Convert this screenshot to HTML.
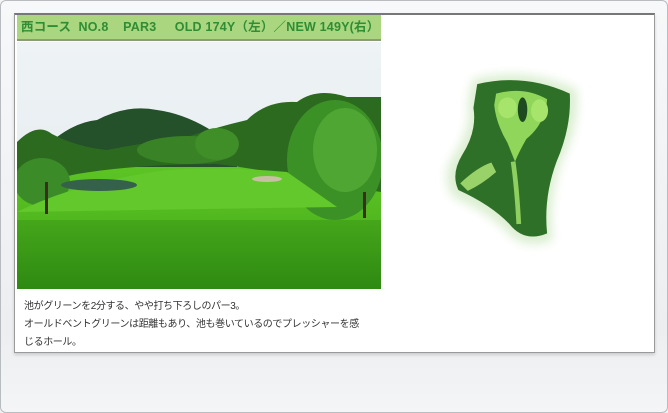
<!DOCTYPE html>
<html><head><meta charset="utf-8"><style>
body{margin:0;width:668px;height:413px;overflow:hidden;background:linear-gradient(#f4f5f6,#e9ebed 70%,#f0f1f2);font-family:"Liberation Sans","Noto Sans CJK JP",sans-serif;position:relative}
.frame{position:absolute;left:0;top:0;width:666px;height:411px;border:1px solid #b8bcc0;border-radius:6px;background:linear-gradient(#f7f8f9,#eceef0 80%,#f4f5f6)}
.panel{position:absolute;left:14px;top:13px;width:639px;height:337px;background:#fff;border:1px solid #9a9a9a;border-top:2px solid #777;box-shadow:0 2px 3px rgba(0,0,0,.15)}
.hdr{position:absolute;left:17px;top:15px;width:364px;height:26px;background:#a9d67e;border-bottom:2px solid #8a9b78;box-sizing:border-box;color:#2f8d35;font-weight:bold;font-size:12.5px;line-height:25px;padding-left:4px;white-space:pre;letter-spacing:0.2px}
.photo{position:absolute;left:17px;top:42px}
.map{position:absolute;left:430px;top:50px}
.txt{position:absolute;left:24px;top:298px;font-size:10px;line-height:18px;color:#333;letter-spacing:-0.4px}
</style></head><body>
<div class="frame"></div>
<div class="panel"></div>
<div class="hdr">西コース  NO.8    PAR3     OLD 174Y（左）／NEW 149Y(右）</div>
<svg class="photo" width="364" height="247" viewBox="0 0 364 247">
<defs><linearGradient id="sky" x1="0" y1="0" x2="0" y2="1"><stop offset="0" stop-color="#eef3f5"/><stop offset="1" stop-color="#e2eaee"/></linearGradient>
<linearGradient id="fw" x1="0" y1="0" x2="0" y2="1"><stop offset="0" stop-color="#5cc424"/><stop offset="1" stop-color="#44a81a"/></linearGradient>
<linearGradient id="fg" x1="0" y1="0" x2="0" y2="1"><stop offset="0" stop-color="#45a61a"/><stop offset="1" stop-color="#2e8a12"/></linearGradient></defs>
<rect width="364" height="247" fill="url(#sky)"/>
<path d="M40 95 Q60 80 80 78 Q110 62 140 68 Q170 72 200 92 L220 100 L220 140 L40 140Z" fill="#24502a"/>
<rect y="125" width="364" height="122" fill="url(#fw)"/>
<rect y="178" width="364" height="69" fill="url(#fg)"/>
<path d="M0 100 Q20 80 35 92 Q60 105 90 108 Q130 100 170 95 Q200 85 230 78 Q250 58 280 60 Q300 45 330 55 L364 55 L364 150 L300 140 Q250 128 200 122 Q120 122 60 132 L0 145Z" fill="#2c6a20"/>
<ellipse cx="170" cy="108" rx="50" ry="14" fill="#3a8226"/>
<ellipse cx="200" cy="102" rx="22" ry="16" fill="#3f8e28"/>
<ellipse cx="318" cy="118" rx="48" ry="60" fill="#3c9126"/>
<ellipse cx="328" cy="108" rx="32" ry="42" fill="#50a632"/>
<ellipse cx="25" cy="140" rx="28" ry="24" fill="#3b8b28"/>
<path d="M150 128 Q200 124 270 130 L320 165 L0 170 Q60 140 150 128Z" fill="#62c82c"/>
<ellipse cx="82" cy="143" rx="38" ry="6" fill="#35604a"/>
<ellipse cx="250" cy="137" rx="15" ry="3" fill="#c8c0a4"/>
<rect x="28" y="140" width="3" height="32" fill="#3b2e1e"/>
<rect x="346" y="150" width="3" height="26" fill="#3b2e1e"/>
</svg>
<svg class="map" width="170" height="210" viewBox="0 0 180 210">
<defs><filter id="b"><feGaussianBlur stdDeviation="5"/></filter></defs>
<path d="M45 25 Q100 10 155 35 Q160 70 140 110 Q125 150 130 195 Q100 208 80 185 Q60 165 25 150 Q10 130 25 105 Q45 75 40 50Z" fill="#dcefd2" filter="url(#b)"/>
<path d="M50 30 Q100 18 148 40 Q150 75 134 112 Q120 150 124 188 Q100 198 84 178 Q65 158 30 142 Q22 125 34 105 Q50 80 46 55Z" fill="#2f7028"/>
<path d="M70 40 Q100 32 124 46 Q122 72 102 88 Q94 102 90 112 L82 92 Q70 72 68 52Z" fill="#8fd65a"/>
<ellipse cx="82" cy="55" rx="10" ry="11" fill="#a6e46c"/>
<ellipse cx="116" cy="58" rx="9" ry="12" fill="#a6e46c"/>
<ellipse cx="98" cy="57" rx="5" ry="13" fill="#1e4a20"/>
<path d="M88 112 Q92 140 94 178" stroke="#8fcf60" stroke-width="5" fill="none"/>
<path d="M32 135 Q50 118 65 113 L70 123 Q55 136 40 143Z" fill="#9ad26a"/>
</svg>
<div class="txt">池がグリーンを2分する、やや打ち下ろしのパー3。<br>オールドベントグリーンは距離もあり、池も巻いているのでプレッシャーを感<br>じるホール。</div>
</body></html>
